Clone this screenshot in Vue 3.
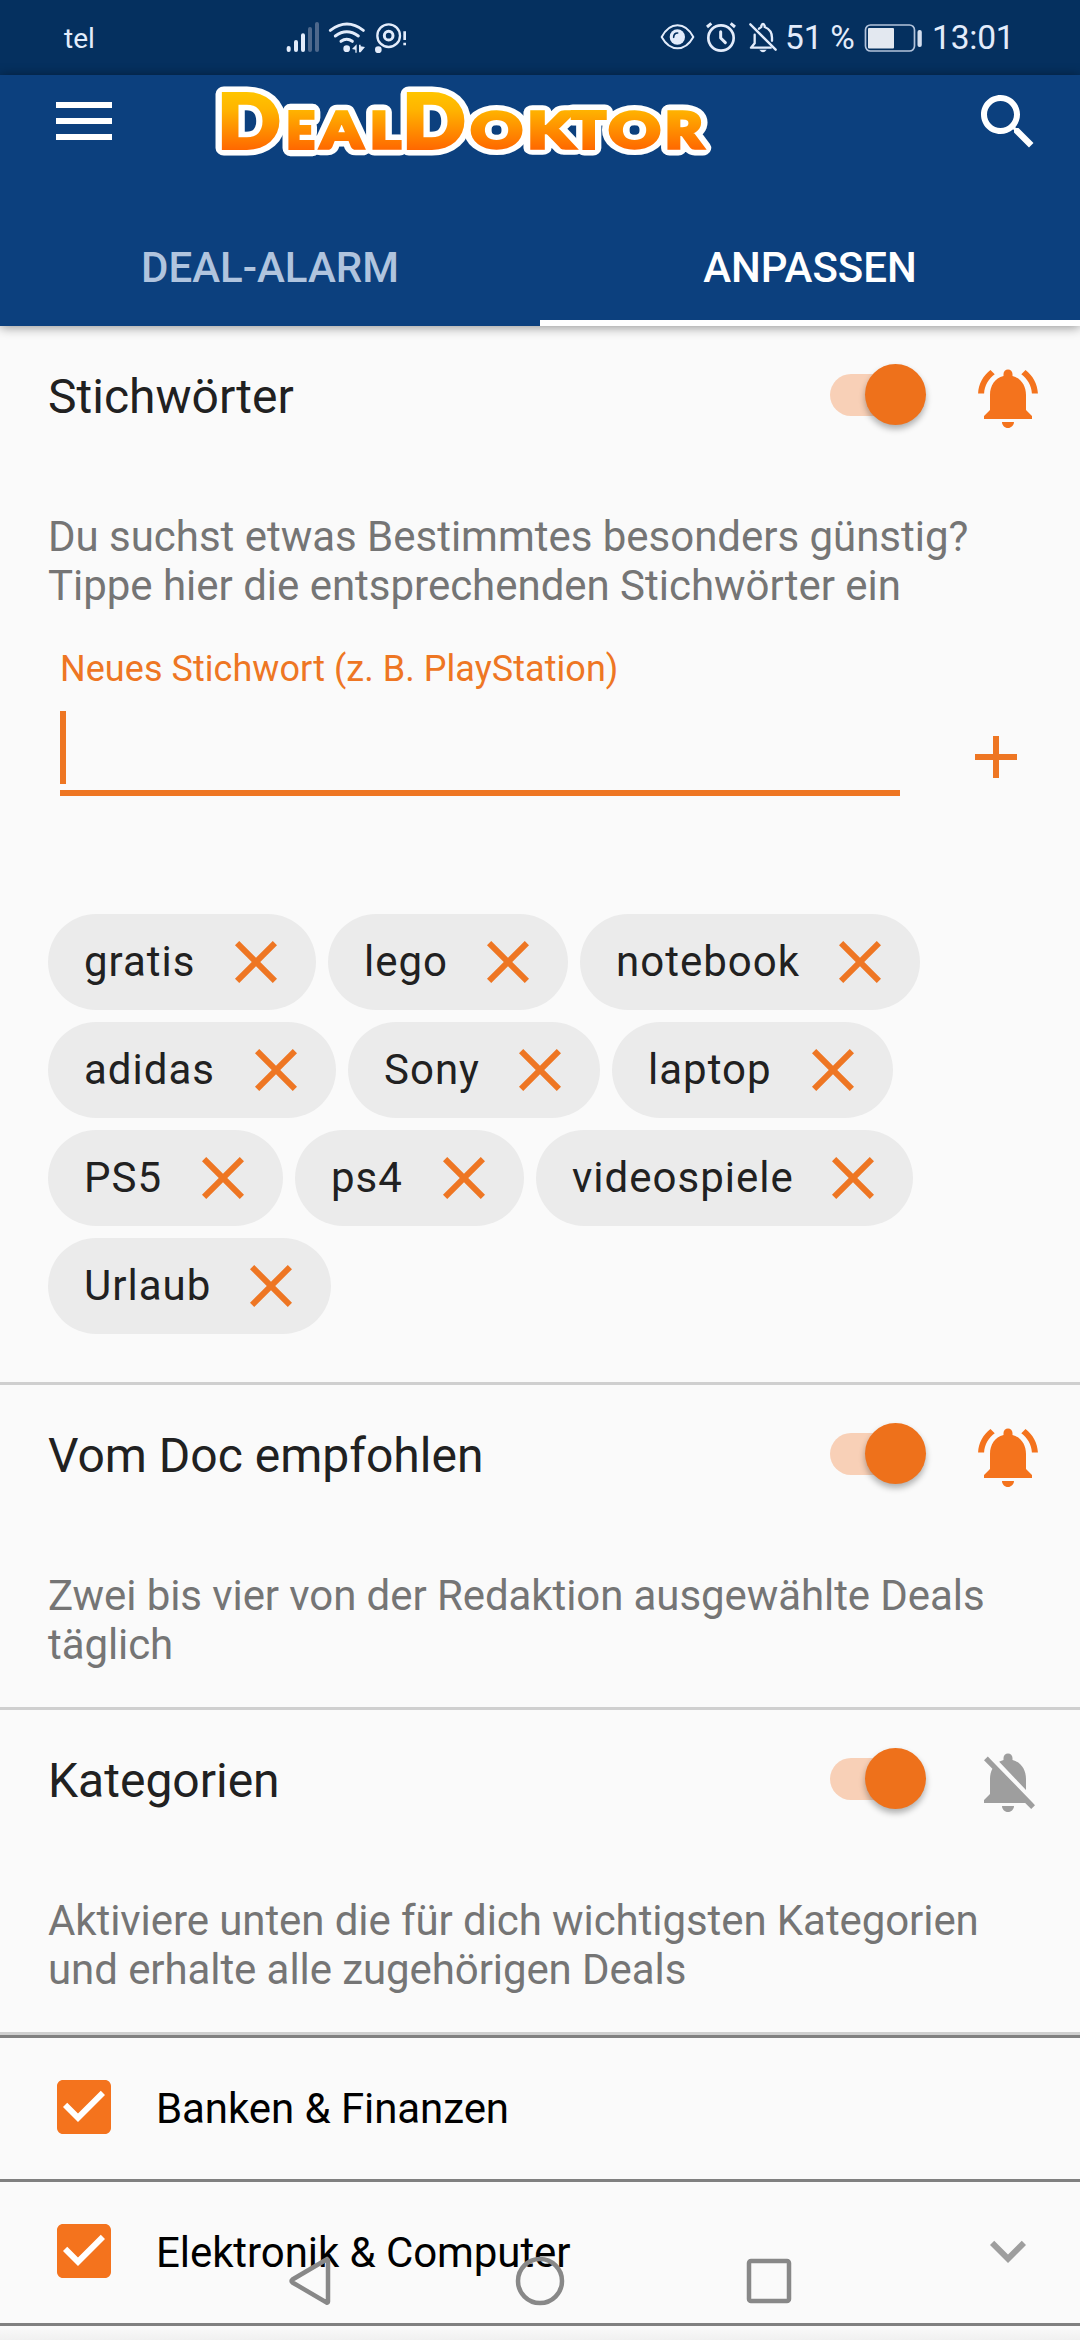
<script setup>
import { ref } from 'vue'

const chips = ref([
  { text: 'gratis', w: 268 },
  { text: 'lego', w: 240 },
  { text: 'notebook', w: 340 },
  { text: 'adidas', w: 288 },
  { text: 'Sony', w: 252 },
  { text: 'laptop', w: 281 },
  { text: 'PS5', w: 235 },
  { text: 'ps4', w: 229 },
  { text: 'videospiele', w: 377 },
  { text: 'Urlaub', w: 283 },
])

// x origin and horizontal stretch of each wordmark letter
const logo = [
  { c: 'D', x: 217.7, s: 1.107, big: true },
  { c: 'E', x: 286.8, s: 0.957 },
  { c: 'A', x: 321, s: 1.175 },
  { c: 'L', x: 370.2, s: 1.154 },
  { c: 'D', x: 402.7, s: 1.107, big: true },
  { c: 'O', x: 470.7, s: 1.274 },
  { c: 'K', x: 527.6, s: 1.33 },
  { c: 'T', x: 571.9, s: 1.107 },
  { c: 'O', x: 608.7, s: 1.274 },
  { c: 'R', x: 665.2, s: 1.145 },
]

const categories = [
  { name: 'Banken & Finanzen', expandable: false },
  { name: 'Elektronik & Computer', expandable: true },
]

const bellOn =
  'M7.58 4.08L6.15 2.65C3.75 4.48 2.17 7.3 2.03 10.5h2c.15-2.65 1.51-4.97 3.55-6.42zm12.39 6.42h2c-.15-3.2-1.73-6.02-4.12-7.85l-1.42 1.43c2.02 1.45 3.39 3.77 3.54 6.42zM18 11c0-3.07-1.64-5.64-4.5-6.32V4c0-.83-.67-1.5-1.5-1.5s-1.5.67-1.5 1.5v.68C7.63 5.36 6 7.92 6 11v5l-2 2v1h16v-1l-2-2v-5zm-6 11c.14 0 .27-.01.4-.04.65-.14 1.18-.58 1.44-1.18.1-.24.15-.5.15-.78h-4c.01 1.1.9 2 2.01 2z'
const bellOff =
  'M20 18.69L7.84 6.14 5.27 3.49 4 4.76l2.8 2.8v.01c-.52.99-.8 2.16-.8 3.42v5l-2 2v1h13.73l2 2L21 19.72l-1-1.03zM12 22c1.11 0 2-.89 2-2h-4c0 1.11.89 2 2 2zm6-7.32V11c0-3.08-1.64-5.64-4.5-6.32V4c0-.83-.67-1.5-1.5-1.5s-1.5.67-1.5 1.5v.68c-.15.03-.29.08-.42.12-.1.03-.2.07-.3.11h-.01c-.01 0-.01 0-.02.01-.23.09-.46.2-.68.31 0 0-.01 0-.01.01L18 14.68z'
</script>

<template>
  <div class="screen">
    <div class="statusbar">
      <span class="carrier">tel</span>
      <svg class="status-left" width="140" height="48" viewBox="0 0 420 144" fill="none" stroke="#e3ecfb" stroke-linecap="round">
        <g stroke-width="12">
          <path d="M38 102v6M60 84v24M81 64v44" />
          <path d="M102 45v63M123 30v78" stroke="#4e688c" />
        </g>
        <path d="M163 49q50-38 99 0M178 66q34-25 69 0M195 82q17-12 34 0" stroke-width="9" />
        <circle cx="212" cy="104" r="10" fill="#e3ecfb" stroke="none" />
        <path d="M228 105l14-14v25h-4v-9zM249 92h5v5l13 2-13 16h-5z" fill="#e3ecfb" stroke="none" />
        <circle cx="338" cy="65" r="34" stroke-width="7" />
        <circle cx="338" cy="65" r="13" stroke-width="9" />
        <circle cx="307" cy="107" r="10" fill="#e3ecfb" stroke="none" />
        <path d="M382 52h8v26h-8zM382 86h8v8h-8z" fill="#e3ecfb" stroke="none" />
      </svg>
      <svg class="status-right" width="130" height="48" viewBox="0 0 390 144" fill="none" stroke="#e3ecfb" stroke-width="8" stroke-linecap="round" stroke-linejoin="round">
        <path d="M35 69C60 22 105 22 130 69C105 114 60 114 35 69z" stroke-width="6" />
        <circle cx="82" cy="69" r="23" fill="#e3ecfb" stroke="none" />
        <path d="M71 70q0-13 12-13" stroke="#05305f" stroke-width="5" />
        <circle cx="213" cy="72" r="38" />
        <path d="M212 53v19l14 14" stroke-width="9" />
        <path d="M171 39l13-11M242 28l13 11" stroke-width="9" stroke-linecap="butt" />
        <path d="M301 31L377 107" stroke-width="7" />
        <path d="M314 62v26l-11 13h59M327 44q5-4 7-5v-4q5-10 10 0v4q22 9 22 32v9" stroke-width="7" />
        <path d="M328 107h22q-11 15-22 0z" fill="#e3ecfb" stroke="none" />
      </svg>
      <span class="percent">51 %</span>
      <svg class="battery" width="60" height="32" viewBox="0 0 60 32">
        <rect x="1.5" y="3" width="49" height="26" rx="5" fill="none" stroke="#b4c4dc" stroke-width="1.7" />
        <rect x="4" y="6" width="26" height="20.500" rx="1" fill="#e3e8f0" />
        <rect x="53.500" y="8" width="4.300" height="17" rx="2" fill="#d5dfef" />
      </svg>
      <span class="clock">13:01</span>
    </div>

    <header class="appbar">
      <div class="toolbar">
        <div class="menu"><i></i><i></i><i></i></div>
        <svg class="logo" width="500" height="80" viewBox="214 82 500 80">
          <defs>
            <linearGradient id="logoFill" gradientUnits="userSpaceOnUse" x1="0" y1="-55" x2="0" y2="2">
              <stop offset="0" stop-color="#ffc400" />
              <stop offset=".3" stop-color="#ffb400" />
              <stop offset="1" stop-color="#ff6800" />
            </linearGradient>
          </defs>
          <g class="logo-outline"><use href="#wordmark" /></g>
          <g class="logo-face">
            <g id="wordmark">
              <text
                v-for="(l, i) in logo"
                :key="i"
                :transform="`translate(${l.x} 147.7) scale(${l.s} 1)`"
                :class="{ big: l.big }"
              >{{ l.c }}</text>
            </g>
          </g>
        </svg>
        <svg class="search" width="72" height="72" viewBox="0 0 24 24" fill="#fff">
          <path d="M15.500 14h-.79l-.28-.27C15.410 12.590 16 11.110 16 9.500 16 5.910 13.090 3 9.500 3S3 5.910 3 9.500 5.910 16 9.500 16c1.610 0 3.090-.59 4.230-1.570l.27.28v.79l5 4.990L20.490 19l-4.990-5zm-6 0C7.010 14 5 11.990 5 9.500S7.010 5 9.500 5 14 7.010 14 9.500 11.990 14 9.500 14z" />
        </svg>
      </div>
      <nav class="tabs">
        <span class="tab">DEAL-ALARM</span>
        <span class="tab active">ANPASSEN</span>
      </nav>
    </header>

    <main>
      <section class="section keywords">
        <div class="head">
          <h2>Stichwörter</h2>
          <span class="switch"><i></i></span>
          <svg class="bell" viewBox="0 0 24 24"><path :d="bellOn" /></svg>
        </div>
        <p>Du suchst etwas Bestimmtes besonders günstig?<br />Tippe hier die entsprechenden Stichwörter ein</p>
        <div class="entry">
          <div class="field">
            <label>Neues Stichwort (z. B. PlayStation)</label>
            <div class="input"><i class="caret"></i></div>
          </div>
          <svg class="add" viewBox="0 0 24 24"><path d="M19 13h-6v6h-2v-6H5v-2h6V5h2v6h6v2z" /></svg>
        </div>
        <div class="chips">
          <div v-for="c in chips" :key="c.text" class="chip" :style="{ width: c.w + 'px' }">
            <span>{{ c.text }}</span>
            <svg viewBox="0 0 24 24"><path d="M19 6.410L17.590 5 12 10.590 6.410 5 5 6.410 10.590 12 5 17.590 6.410 19 12 13.410 17.590 19 19 17.590 13.410 12z" /></svg>
          </div>
        </div>
      </section>

      <section class="section">
        <div class="head">
          <h2>Vom Doc empfohlen</h2>
          <span class="switch"><i></i></span>
          <svg class="bell" viewBox="0 0 24 24"><path :d="bellOn" /></svg>
        </div>
        <p>Zwei bis vier von der Redaktion ausgewählte Deals<br />täglich</p>
      </section>

      <section class="section">
        <div class="head">
          <h2>Kategorien</h2>
          <span class="switch"><i></i></span>
          <svg class="bell off" viewBox="0 0 24 24"><path :d="bellOff" /></svg>
        </div>
        <p>Aktiviere unten die für dich wichtigsten Kategorien<br />und erhalte alle zugehörigen Deals</p>
      </section>

      <div class="categories">
        <div v-for="c in categories" :key="c.name" class="category">
          <svg class="check" viewBox="0 0 24 24">
            <rect x="4" y="5" width="16" height="14" fill="#fff" />
            <path d="M19 3H5c-1.110 0-2 .9-2 2v14c0 1.100.89 2 2 2h14c1.110 0 2-.9 2-2V5c0-1.100-.89-2-2-2zm-9 14l-5-5 1.410-1.410L10 14.170l7.590-7.590L19 8l-9 9z" />
          </svg>
          <span>{{ c.name }}</span>
          <svg v-if="c.expandable" class="chevron" viewBox="0 0 24 24"><path d="M16.590 8.590L12 13.170 7.410 8.590 6 10l6 6 6-6z" /></svg>
        </div>
        <div class="rest"></div>
      </div>
    </main>

    <div class="navbar">
      <svg width="48" height="52" viewBox="0 0 48 52"><path d="M40.500 4.500L6.500 24.500q-2 1.500 0 3L40.500 47.500q1.500.5 1.500-1V5.500q0-1.500-1.500-1z" /></svg>
      <svg width="48" height="52" viewBox="0 0 48 52"><circle cx="25" cy="26" r="22" /></svg>
      <svg width="48" height="52" viewBox="0 0 48 52"><rect x="5" y="6" width="40" height="40" rx="2" /></svg>
    </div>
  </div>
</template>

<style>
body {
  background: #fafafa;
}
</style>

<style scoped>
.screen {
  position: relative;
  width: 1080px;
  height: 2340px;
  overflow: hidden;
  background: #fafafa;
  font-family: Roboto, 'Noto Sans', sans-serif;
  color: #212121;
}
svg {
  display: block;
  flex: none;
}
.statusbar {
  display: flex;
  align-items: center;
  height: 75px;
  background: #05305f;
  color: #e3ecfb;
  font-size: 33.5px;
  line-height: 40px;
}
.carrier {
  width: 212px;
  margin-left: 64px;
  padding-top: 2px;
  font-size: 28px;
}
.status-left,
.status-right {
  margin-bottom: -1px;
}
.status-right {
  margin-left: 234px;
}
.percent {
  width: 78px;
  margin-left: 5px;
  white-space: nowrap;
  letter-spacing: -0.2px;
}
.battery {
  margin-left: 1px;
}
.clock {
  margin-left: 8px;
  letter-spacing: -0.2px;
}
.appbar {
  position: relative;
  height: 251px;
  background: #0c407e;
  box-shadow: 0 1px 11px rgba(0, 0, 0, 0.45);
}
.toolbar {
  display: flex;
  height: 141px;
}
.menu {
  display: flex;
  flex-direction: column;
  gap: 10px;
  width: 56px;
  margin: 27px 0 0 56px;
}
.menu i {
  height: 6px;
  background: #fff;
}
.logo {
  margin: 7px 0 0 102px;
  overflow: visible;
}
.logo text {
  font-family: Lato, 'Open Sans', sans-serif;
  font-weight: 900;
  font-size: 50px;
  vector-effect: non-scaling-stroke;
}
.logo text.big {
  font-size: 74px;
}
.logo-outline {
  fill: #fff;
  stroke: #fff;
  stroke-width: 16px;
  stroke-linejoin: round;
}
.logo-face {
  fill: url(#logoFill);
  stroke: url(#logoFill);
  stroke-width: 4px;
}
.search {
  margin: 11px 0 0 258px;
}
.tabs {
  display: flex;
  height: 110px;
}
.tab {
  flex: 1;
  box-sizing: border-box;
  height: 110px;
  padding-top: 27px;
  text-align: center;
  font-size: 42px;
  line-height: 49px;
  font-weight: 500;
  color: #b0c4de;
}
.tab.active {
  color: #fff;
  border-bottom: 6px solid #fff;
}
.section {
  border-bottom: 3px solid #cfcfcf;
  padding-bottom: 38px;
}
.section.keywords {
  padding-bottom: 48px;
}
.head {
  display: flex;
  align-items: center;
  height: 144px;
  padding: 0 36px 0 48px;
}
h2 {
  flex: 1;
  margin: 0 0 3px;
  font-size: 48px;
  line-height: 56px;
  font-weight: 400;
}
.switch {
  display: flex;
  align-items: center;
  justify-content: flex-end;
  width: 96px;
  height: 42px;
  margin: 0 46px 7px 0;
  border-radius: 21px;
  background: linear-gradient(to right, #f8d0b7 75px, transparent 75px);
}
.switch i {
  width: 61px;
  height: 61px;
  flex: none;
  border-radius: 50%;
  background: #ee711b;
  box-shadow: 0 4px 6px rgba(0, 0, 0, 0.3);
}
.bell {
  width: 72px;
  height: 72px;
  fill: #f4731d;
}
.bell.off {
  fill: #9e9e9e;
}
p {
  margin: 42px 48px 0;
  font-size: 42px;
  line-height: 49px;
  letter-spacing: -0.08px;
  color: #757575;
  white-space: nowrap;
}
.keywords p {
  letter-spacing: -0.02px;
}
.entry {
  display: flex;
  margin: 38px 0 118px 60px;
}
.field {
  width: 840px;
  height: 148px;
}
label {
  display: block;
  font-size: 36px;
  line-height: 42px;
  letter-spacing: 0.05px;
  color: #ee7623;
  white-space: nowrap;
}
.input {
  display: flex;
  height: 79px;
  margin-top: 21px;
  border-bottom: 6px solid #ee7623;
}
.caret {
  width: 6px;
  height: 73px;
  background: #ee7623;
}
.add {
  width: 72px;
  height: 72px;
  margin: 73px 0 0 60px;
  fill: #ee7623;
}
.chips {
  display: flex;
  flex-wrap: wrap;
  gap: 12px;
  width: 900px;
  margin-left: 48px;
}
.chip {
  display: flex;
  align-items: center;
  justify-content: space-between;
  box-sizing: border-box;
  height: 96px;
  padding: 0 24px 0 36px;
  border-radius: 48px;
  background: #ebebeb;
  font-size: 42px;
  letter-spacing: 1px;
}
.chip span {
  margin-bottom: 1px;
}
.chip svg {
  width: 72px;
  height: 72px;
  fill: #ee7623;
}
.category {
  display: flex;
  align-items: center;
  box-sizing: border-box;
  height: 144px;
  padding: 0 36px 0 48px;
  border-top: 3px solid #808080;
  font-size: 42px;
  line-height: 49px;
  letter-spacing: -0.07px;
  color: #000;
}
.category svg {
  width: 72px;
  height: 72px;
  margin-bottom: 3px;
}
.category span {
  flex: 1;
  margin-left: 36px;
}
.check {
  fill: #f4731d;
}
.chevron {
  fill: #9e9e9e;
}
.rest {
  height: 14px;
  border-top: 3px solid #808080;
  background: linear-gradient(#fafafa, #f0f0f0);
}
.navbar {
  position: absolute;
  left: 286px;
  top: 2255px;
  display: flex;
  gap: 181px;
}
.navbar svg {
  overflow: visible;
  fill: none;
  stroke: #888;
  stroke-width: 4.5px;
}
</style>
